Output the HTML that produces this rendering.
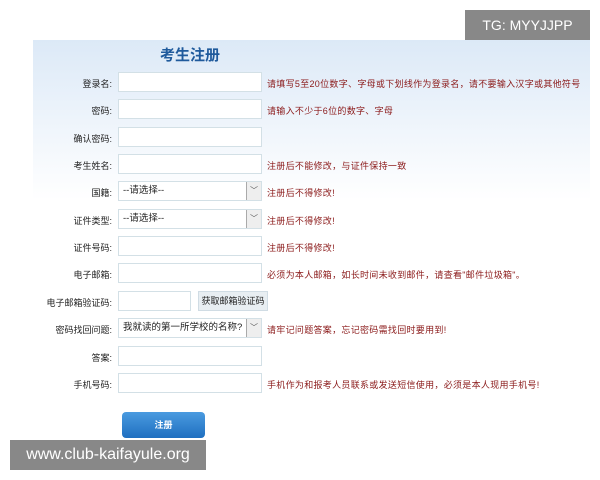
<!DOCTYPE html>
<html><head><meta charset="utf-8"><style>
body{margin:0;width:600px;height:480px;position:relative;background:#fff;font-family:"Liberation Sans","Noto Sans CJK SC",sans-serif;overflow:hidden}
.bg{position:absolute;left:33px;top:40px;width:557px;height:160px;background:linear-gradient(#dce9f7,#fff)}
.title{position:absolute;left:160px;top:44px;font-size:15px;font-weight:bold;color:#1f5a9c}
.l{position:absolute;width:112px;text-align:right;font-size:9px;color:#222;left:0}
.i{position:absolute;left:118px;width:144px;height:20px;border:1px solid #d3e0e6;background:#fff;box-sizing:border-box}
.h{position:absolute;left:267px;font-size:9px;color:#8b1a1a;letter-spacing:0.3px}
.s{font-size:9.5px;color:#222;padding-left:4px;line-height:18px}
.arr{position:absolute;right:0;top:0;width:14px;height:18px;border-left:1px solid #aaa;background:#eee;font-size:8px;text-align:center;line-height:18px;color:#555}
.wm{position:absolute;background:#888;color:#fff;font-size:15px}
</style></head><body>
<div class="bg"></div>
<div class="title">考生注册</div>

<div class="l" style="top:77px">登录名:</div><div class="i" style="top:72px"></div><div class="h" style="top:77px">请填写5至20位数字、字母或下划线作为登录名，请不要输入汉字或其他符号</div>
<div class="l" style="top:104px">密码:</div><div class="i" style="top:99px"></div><div class="h" style="top:104px">请输入不少于6位的数字、字母</div>
<div class="l" style="top:132px">确认密码:</div><div class="i" style="top:127px"></div>
<div class="l" style="top:159px">考生姓名:</div><div class="i" style="top:154px"></div><div class="h" style="top:159px">注册后不能修改，与证件保持一致</div>
<div class="l" style="top:186px">国籍:</div><div class="i s" style="top:181px">--请选择--<div class="arr">﹀</div></div><div class="h" style="top:186px">注册后不得修改!</div>
<div class="l" style="top:214px">证件类型:</div><div class="i s" style="top:209px">--请选择--<div class="arr">﹀</div></div><div class="h" style="top:214px">注册后不得修改!</div>
<div class="l" style="top:241px">证件号码:</div><div class="i" style="top:236px"></div><div class="h" style="top:241px">注册后不得修改!</div>
<div class="l" style="top:268px">电子邮箱:</div><div class="i" style="top:263px"></div><div class="h" style="top:268px">必须为本人邮箱，如长时间未收到邮件，请查看"邮件垃圾箱"。</div>
<div class="l" style="top:296px">电子邮箱验证码:</div><div class="i" style="top:291px;width:73px"></div>
<div style="position:absolute;left:198px;top:291px;width:70px;height:20px;background:#e8eef2;border:1px solid #d0dce4;box-sizing:border-box;font-size:9px;text-align:center;line-height:18px;color:#222">获取邮箱验证码</div>
<div class="l" style="top:323px">密码找回问题:</div><div class="i s" style="top:318px">我就读的第一所学校的名称?<div class="arr">﹀</div></div><div class="h" style="top:323px">请牢记问题答案，忘记密码需找回时要用到!</div>
<div class="l" style="top:351px">答案:</div><div class="i" style="top:346px"></div>
<div class="l" style="top:378px">手机号码:</div><div class="i" style="top:373px"></div><div class="h" style="top:378px">手机作为和报考人员联系或发送短信使用，必须是本人现用手机号!</div>

<div style="position:absolute;left:122px;top:412px;width:83px;height:26px;border-radius:4px;background:linear-gradient(#4a9be0,#1f6fc0);color:#fff;font-size:9px;font-weight:bold;text-align:center;line-height:26px">注册</div>

<div class="wm" style="left:465px;top:10px;width:125px;height:30px;line-height:30px;text-align:center;font-size:14px">TG: MYYJJPP</div>
<div class="wm" style="left:10px;top:440px;width:196px;height:30px;line-height:30px;text-align:center;font-size:16px">www.club-kaifayule.org</div>
</body></html>
